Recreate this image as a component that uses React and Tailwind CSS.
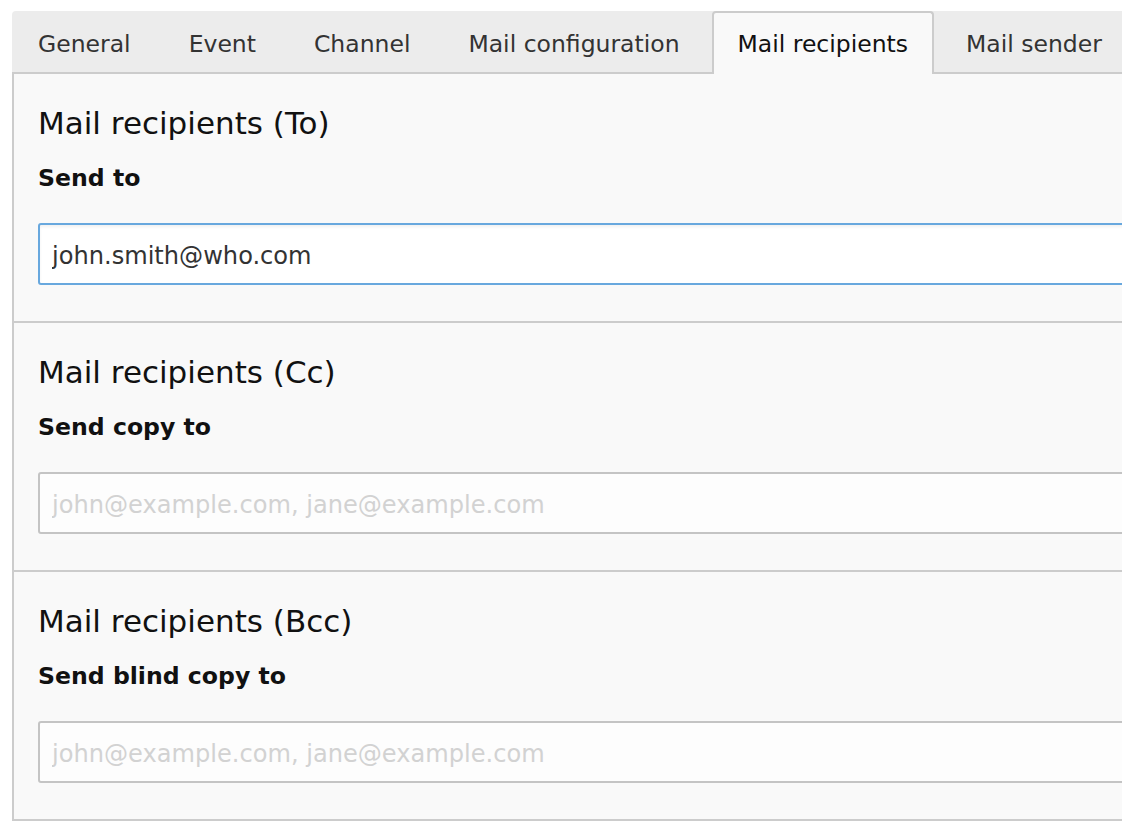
const tabs = ['General', 'Event', 'Channel', 'Mail configuration', 'Mail recipients', 'Mail sender']

const sections = [
  { title: 'Mail recipients (To)', label: 'Send to', value: 'john.smith@who.com', focused: true },
  { title: 'Mail recipients (Cc)', label: 'Send copy to', value: '' },
  { title: 'Mail recipients (Bcc)', label: 'Send blind copy to', value: '' },
]

export default function App() {
  return (
    <div className="w-[1122px] h-[836px] overflow-hidden bg-white font-['DejaVu_Sans',sans-serif]">
      <div className="ml-[12px] mt-[11px] w-[1200px]">

        {/* Tabs */}
        <div className="flex items-end gap-[6px] h-[63px] bg-[#ececec] border-b-2 border-[#cccccc] rounded-tl-[4px]">
          {tabs.map((tab) =>
            tab === 'Mail recipients' ? (
              <div
                key={tab}
                className="h-[63px] -mb-[2px] flex items-center pt-[3px] px-[24px] bg-[#f9f9f9] border-2 border-b-0 border-[#cccccc] rounded-t-[4px] text-[23.5px] text-[#111]"
              >
                {tab}
              </div>
            ) : (
              <div key={tab} className="h-[61px] flex items-center pt-[7px] px-[26px] text-[23.5px] text-[#333]">
                {tab}
              </div>
            )
          )}
        </div>

        {/* Panel */}
        <div className="bg-[#f9f9f9] border-l-2 border-[#cccccc]">
          {sections.map((s) => (
            <div key={s.title} className="pt-[31px] pb-[36px] pl-[24px] border-b-2 border-[#cccccc]">
              <h2 className="h-[36px] leading-[36px] text-[31px] text-[#111]">{s.title}</h2>
              <div className="mt-[23px] h-[28px] leading-[28px] text-[23.6px] font-bold text-[#111]">{s.label}</div>
              <input
                readOnly
                value={s.value}
                placeholder="john@example.com, jane@example.com"
                className={
                  s.focused
                    ? 'mt-[31px] block w-[1150px] h-[62px] pl-[12px] pt-[4px] rounded-[3px] border-2 border-[#68a8de] bg-white text-[24.1px] text-[#333] outline-none shadow-[inset_0_2px_3px_rgba(0,0,0,0.06)]'
                    : 'mt-[31px] block w-[1150px] h-[62px] pl-[12px] pt-[4px] rounded-[3px] border-2 border-[#c4c4c4] bg-[#fdfdfd] text-[24.1px] text-[#333] outline-none placeholder:text-[#d2d2d2]'
                }
              />
            </div>
          ))}
        </div>
      </div>
    </div>
  )
}
